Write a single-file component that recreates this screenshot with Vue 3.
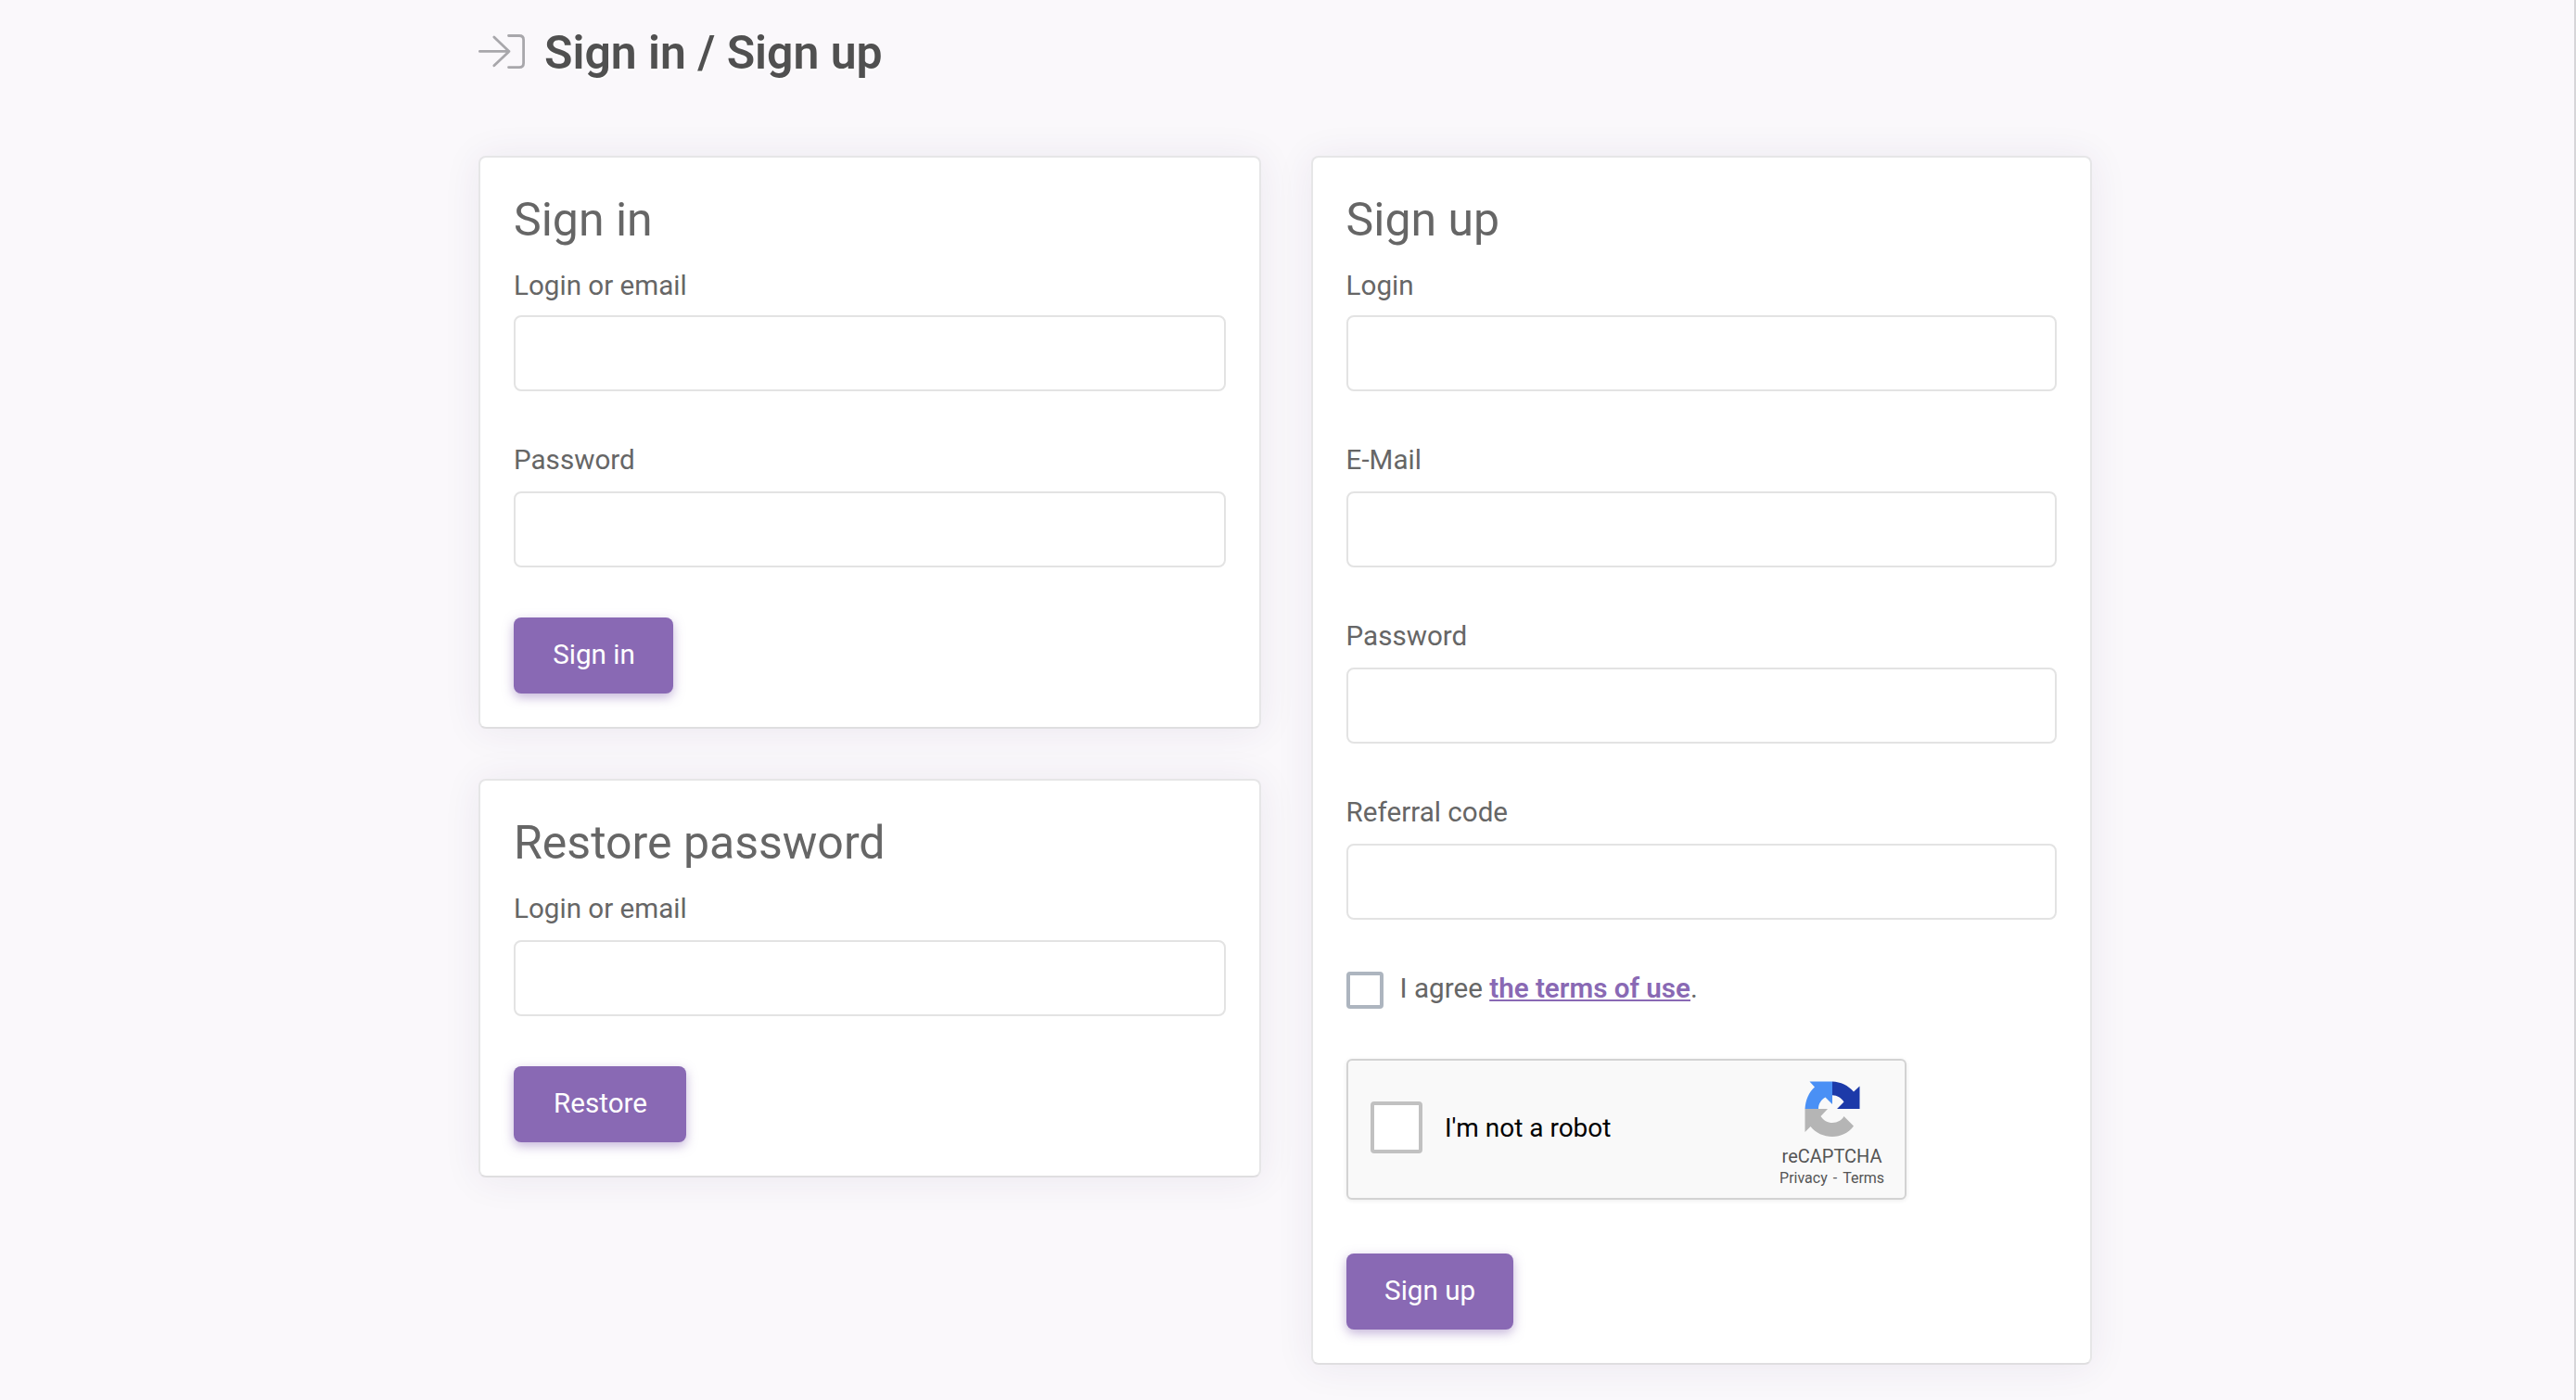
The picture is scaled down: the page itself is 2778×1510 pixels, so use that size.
<template>
  <div class="page">
    <header class="page-header">
      <svg class="login-icon" width="50" height="38" viewBox="0 0 50 38">
        <path d="M1.4 18.4H33M16.8 3L33 18.400L16.800 33.800M32.500 1.500H44Q48.600 1.500 48.600 6V31Q48.600 35.600 44 35.600H32.500" />
      </svg>
      <h1>Sign in / Sign up</h1>
    </header>

    <main class="columns">
      <div class="column">
        <form v-for="form in leftForms" :key="form.title" class="card" :class="form.name" @submit.prevent>
          <h2>{{ form.title }}</h2>
          <label v-for="field in form.fields" :key="field.label" class="field">
            <span>{{ field.label }}</span>
            <input v-model="field.value" :type="field.type" />
          </label>
          <button class="btn" type="submit">{{ form.action }}</button>
        </form>
      </div>

      <div class="column">
        <form class="card sign-up" @submit.prevent>
          <h2>Sign up</h2>
          <label v-for="field in signUpFields" :key="field.label" class="field">
            <span>{{ field.label }}</span>
            <input v-model="field.value" :type="field.type" />
          </label>

          <div class="agree">
            <input v-model="agreed" type="checkbox" class="check" />
            <p>I agree <a href="#">the terms of use</a>.</p>
          </div>

          <div class="captcha">
            <input v-model="human" type="checkbox" class="captcha-check" />
            <span class="captcha-text">I'm not a robot</span>
            <div class="captcha-brand">
              <svg width="60" height="60" viewBox="0 0 60 60">
                <path fill="#4a90f5" d="M0.500 30C1 21 4.500 12 11 6.500L5.500 0.500H30V25L22.500 17.500C18 20 15 24.500 15 30Z" />
                <path fill="#1c3aa9" d="M30 0.500C39 1 47 4.500 53 11.500L59.500 5.500V30H35L42.500 22.500C39.500 18 35.500 15.500 30 15.300Z" />
                <path fill="#b5b5b5" d="M0.500 30H25L17.500 38C20.500 42.500 25 45 30 45C35.500 45 40.500 42 42.500 38L53 48.500C47.500 56 39 60 30 60C21 60 12 56 6.500 49L0.500 55Z" />
              </svg>
              <div class="captcha-name">reCAPTCHA</div>
              <div class="captcha-links"><span>Privacy</span><span>-</span><span>Terms</span></div>
            </div>
          </div>

          <button class="btn" type="submit">Sign up</button>
        </form>
      </div>
    </main>
  </div>
</template>

<script setup>
import { ref } from 'vue';

const leftForms = ref([
  {
    name: 'sign-in',
    title: 'Sign in',
    action: 'Sign in',
    fields: [
      { label: 'Login or email', type: 'text', value: '' },
      { label: 'Password', type: 'password', value: '' }
    ]
  },
  {
    name: 'restore',
    title: 'Restore password',
    action: 'Restore',
    fields: [{ label: 'Login or email', type: 'text', value: '' }]
  }
]);

const signUpFields = ref([
  { label: 'Login', type: 'text', value: '' },
  { label: 'E-Mail', type: 'email', value: '' },
  { label: 'Password', type: 'password', value: '' },
  { label: 'Referral code', type: 'text', value: '' }
]);

const agreed = ref(false);
const human = ref(false);
</script>

<style>
body {
  margin: 0;
  background: #faf8fb;
}
</style>

<style scoped>
.page {
  box-sizing: border-box;
  height: 1510px;
  padding-left: 516px;
  border-right: 2px solid #d6d5d8;
  overflow: hidden;
  font-family: Roboto, sans-serif;
  font-size: 29.6px;
  color: #666;
}

.page-header {
  display: flex;
  align-items: center;
  gap: 21px;
  height: 112px;
  margin-bottom: 56px;
}

.login-icon {
  fill: none;
  stroke: #a8a7ab;
  stroke-width: 2.8;
  stroke-linecap: round;
  stroke-linejoin: round;
}

h1 {
  margin: 0;
  padding-top: 2px;
  font-size: 49.9px;
  font-weight: 600;
  line-height: 60px;
  color: #505050;
  text-shadow: 0 2px 0 #fff;
}

.columns {
  display: grid;
  grid-template-columns: 843.6px 842.4px;
  gap: 54px;
  align-items: start;
}

.column {
  display: flex;
  flex-direction: column;
  gap: 54px;
}

.card {
  box-sizing: border-box;
  padding: 36px;
  border: 2px solid #e6e6e7;
  border-bottom-color: #dfdee0;
  border-radius: 8px;
  background: #fff;
  box-shadow: 0 2px 40px rgba(70, 40, 100, 0.08);
}

h2 {
  margin: 0 0 18px;
  font-size: 50px;
  font-weight: 400;
  line-height: 62px;
}

.field {
  display: block;
  margin-bottom: 54px;
}

.field span {
  display: block;
  height: 54px;
  line-height: 44px;
}

.field + .field span,
.restore .field span {
  height: 56px;
}

.field + .field {
  margin-top: -2px;
}

.field input {
  display: block;
  box-sizing: border-box;
  width: 100%;
  height: 82px;
  padding: 0 24px;
  border: 2px solid #e3e3e3;
  border-radius: 8px;
  background: #fff;
  font: inherit;
  color: inherit;
  outline: none;
}

.field input:focus {
  border-color: #8969b4;
}

.btn {
  display: block;
  min-width: 172px;
  height: 82px;
  padding: 0 40px 2px 41px;
  border: none;
  border-radius: 8px;
  background: #8969b4;
  box-shadow: 0 4px 12px rgba(137, 105, 180, 0.5);
  font: inherit;
  line-height: 80px;
  color: #fff;
  cursor: pointer;
}

.restore .btn {
  min-width: 186px;
}

.sign-up .btn {
  min-width: 180px;
}

.agree {
  display: flex;
  align-items: flex-start;
  gap: 18px;
  height: 40px;
  margin: 56px 0 54px;
}

.agree p {
  margin: 0;
  line-height: 36px;
}

.agree a {
  font-weight: 600;
  color: #8969b4;
  text-decoration: underline;
}

.check,
.captcha-check {
  appearance: none;
  box-sizing: border-box;
  flex: none;
  width: 40px;
  height: 40px;
  margin: 0;
  border: 4px solid #adb5bf;
  border-radius: 4px;
  background: #fff;
}

.check:checked {
  background: #8969b4;
}

.captcha {
  display: flex;
  align-items: center;
  box-sizing: border-box;
  width: 604px;
  height: 152px;
  margin-bottom: 58px;
  padding: 0 20px 4px 24px;
  border: 2px solid #d3d3d3;
  border-radius: 6px;
  background: #f9f9f9;
  box-shadow: 0 1px 5px rgba(0, 0, 0, 0.08);
  color: #000;
}

.captcha-check {
  width: 56px;
  height: 56px;
  border-color: #c1c1c1;
}

.captcha-text {
  flex: 1;
  margin-left: 24.4px;
  font-size: 28px;
}

.captcha-brand {
  display: flex;
  flex-direction: column;
  align-items: center;
  align-self: flex-start;
  width: 116px;
  padding-top: 22px;
  color: #555;
}

.captcha-name {
  margin-top: 10px;
  font-size: 20px;
  line-height: 22px;
}

.captcha-links {
  display: flex;
  gap: 6px;
  margin-top: 4px;
  font-size: 16px;
  line-height: 18px;
}
</style>
